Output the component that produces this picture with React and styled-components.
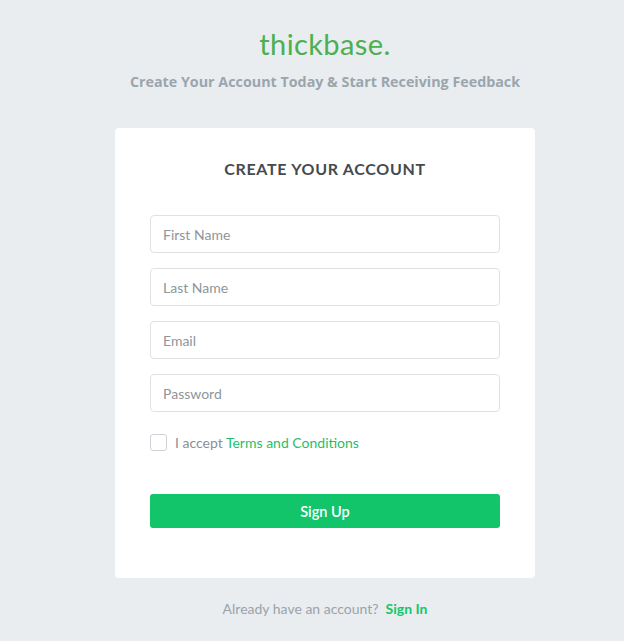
import styled, { createGlobalStyle } from 'styled-components';

const GlobalStyle = createGlobalStyle`
* {
  margin: 0;
  padding: 0;
  box-sizing: border-box;
}
body {
  background: #e9edf0;
  font-family: Lato, 'Open Sans', sans-serif;
}
`;

const Page = styled.div`
  min-height: 641px;
  display: flex;
  flex-direction: column;
  align-items: center;
  padding: 27px 0 0 26px;
`;

const Logo = styled.h1`
  font-size: 29px;
  font-weight: 400;
  color: #4caf50;
  letter-spacing: 0.4px;
  line-height: 34px;
`;

const Tagline = styled.p`
  margin-top: 11px;
  font-family: 'Open Sans', sans-serif;
  font-size: 14.3px;
  font-weight: 700;
  color: #9ba5ae;
  line-height: 19px;
`;

const Card = styled.div`
  margin-top: 37px;
  width: 420px;
  background: #fff;
  border-radius: 4px;
  padding: 30px 35px 50px;
`;

const Title = styled.h2`
  text-align: center;
  font-size: 16px;
  font-weight: 700;
  color: #454a4f;
  letter-spacing: 0.7px;
  line-height: 22px;
`;

const Form = styled.form`
  margin-top: 35px;
  display: flex;
  flex-direction: column;
  gap: 15px;
`;

const Input = styled.input`
  height: 38px;
  width: 100%;
  border: 1px solid #dfe2e5;
  border-radius: 4px;
  padding: 0 12px;
  font-family: inherit;
  font-size: 14px;
  color: #444;
  outline: none;

  &::placeholder {
    color: #8e959b;
  }
`;

const CheckRow = styled.label`
  margin-top: 7px;
  display: flex;
  align-items: center;
  gap: 8px;
  font-size: 14px;
  color: #8a9096;
`;

const Box = styled.span`
  width: 17px;
  height: 17px;
  border: 1px solid #cfd3d7;
  border-radius: 3px;
  background: #fff;
`;

const Link = styled.a`
  color: ${(p) => (p.$bold ? '#13c66b' : '#1fbf6a')};
  font-weight: ${(p) => (p.$bold ? 700 : 400)};
  text-decoration: none;
`;

const Button = styled.button`
  margin-top: 28px;
  height: 34px;
  width: 100%;
  border: none;
  border-radius: 3px;
  background: #12c46a;
  color: #fff;
  font-family: inherit;
  font-size: 14.5px;
  font-weight: 600;
`;

const Footer = styled.p`
  margin-top: 22px;
  font-size: 14px;
  color: #9ba2a9;

  a {
    margin-left: 7px;
  }
`;

export default function App() {
  return (
    <>
      <GlobalStyle />
      <Page>
        <Logo>thickbase.</Logo>
        <Tagline>Create Your Account Today &amp; Start Receiving Feedback</Tagline>
        <Card>
          <Title>CREATE YOUR ACCOUNT</Title>
          <Form onSubmit={(e) => e.preventDefault()}>
            <Input placeholder='First Name' />
            <Input placeholder='Last Name' />
            <Input placeholder='Email' />
            <Input placeholder='Password' type='password' />
            <CheckRow>
              <Box />
              <span>
                I accept <Link href='#'>Terms and Conditions</Link>
              </span>
            </CheckRow>
            <Button type='submit'>Sign Up</Button>
          </Form>
        </Card>
        <Footer>
          Already have an account?
          <Link href='#' $bold>
            Sign In
          </Link>
        </Footer>
      </Page>
    </>
  );
}
